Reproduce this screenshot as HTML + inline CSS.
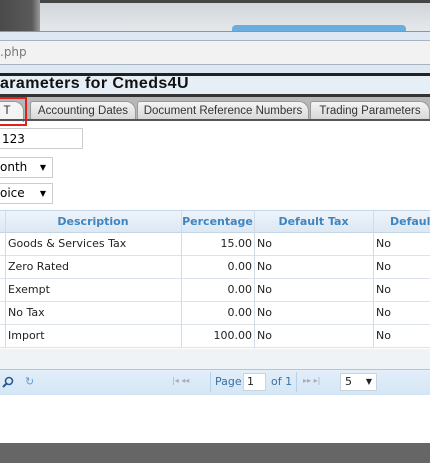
<!DOCTYPE html><html><head><style>
body{margin:0;width:430px;height:463px;overflow:hidden;position:relative;font-family:"DejaVu Sans","Liberation Sans",sans-serif;background:#fff}
.a{position:absolute}
.tab{position:absolute;top:101px;height:18px;background:linear-gradient(#f4f4f4,#d6d6d6);border:1px solid #999;border-bottom:none;border-radius:3px 10px 0 0;font-family:"Liberation Sans",sans-serif;font-size:11.5px;color:#333;line-height:18px;text-align:center}
.row{position:absolute;left:0;width:430px;height:22px;border-bottom:1px solid #dde3ea;font-size:11px;color:#222;line-height:22px}
.row span{position:absolute}
.vl{position:absolute;top:210px;height:138px;width:1px;background:#d3dbe4}
</style></head><body>
<div class="a" style="left:0;top:0;width:430px;height:32px;background:linear-gradient(#cfd3d8,#e6e9ec)"></div>
<div class="a" style="left:0;top:0;width:430px;height:3px;background:#444"></div>
<div class="a" style="left:0;top:0;width:40px;height:32px;background:linear-gradient(90deg,#4a4a4a,#5a5a5a 80%,#9a9a9a)"></div>
<div class="a" style="left:232px;top:25px;width:174px;height:7px;background:#6aaee0;border-radius:4px 4px 0 0"></div>
<div class="a" style="left:0;top:31px;width:430px;height:1px;background:#8a96a0"></div>
<div class="a" style="left:0;top:32px;width:430px;height:41px;background:#dde8f2"></div>
<div class="a" style="left:0;top:40px;width:430px;height:23px;background:#f2f2f2;border-top:1px solid #a8b4c0;border-bottom:1px solid #a8b4c0"></div>
<div class="a" style="left:0;top:45px;font-size:12px;color:#777">.php</div>
<div class="a" style="left:0;top:73px;width:430px;height:3px;background:#222"></div>
<div class="a" style="left:0;top:76px;width:430px;height:18px;background:#e6eef6"></div>
<div class="a" style="left:0;top:75px;font-family:'Liberation Sans',sans-serif;font-size:16px;font-weight:bold;color:#111;letter-spacing:0.4px">arameters for Cmeds4U</div>
<div class="a" style="left:0;top:94px;width:430px;height:3px;background:#333"></div>
<div class="a" style="left:0;top:97px;width:430px;height:24px;background:#b8b8b8"></div>
<div class="tab" style="left:-10px;width:32px;background:#f4f4f4;height:20px">T</div>
<div class="tab" style="left:30px;width:104px">Accounting Dates</div>
<div class="tab" style="left:137px;width:170px">Document Reference Numbers</div>
<div class="tab" style="left:310px;width:118px">Trading Parameters</div>
<div class="a" style="left:0;top:119px;width:430px;height:2px;background:#555"></div>
<div class="a" style="left:-2px;top:97px;width:25px;height:25px;border:2px solid #d22"></div>
<div class="a" style="left:-1px;top:128px;width:84px;height:21px;border:1px solid #ccc;font-size:12px;line-height:20px;padding-left:2px;box-sizing:border-box">123</div>
<div class="a" style="left:-1px;top:157px;width:52px;height:19px;border:1px solid #ccc;font-size:12px;line-height:19px">onth<span style="position:absolute;right:6px;font-size:8px">▼</span></div>
<div class="a" style="left:-1px;top:183px;width:52px;height:19px;border:1px solid #ccc;font-size:12px;line-height:19px">oice<span style="position:absolute;right:6px;font-size:8px">▼</span></div>
<div class="a" style="left:0;top:210px;width:430px;height:23px;background:linear-gradient(#eef4fa,#dce8f4);border-top:1px solid #c5d5e5;border-bottom:1px solid #c5d5e5;box-sizing:border-box;font-size:11px;font-weight:bold;color:#3f85c0;line-height:21px">
<span class="a" style="left:5px;width:176px;text-align:center">Description</span>
<span class="a" style="left:181px;width:73px;text-align:center">Percentage</span>
<span class="a" style="left:254px;width:119px;text-align:center">Default Tax</span>
<span class="a" style="left:390px">Default</span></div>
<div class="row" style="top:233px"><span style="left:8px">Goods &amp; Services Tax</span><span style="right:178px">15.00</span><span style="left:257px">No</span><span style="left:376px">No</span></div>
<div class="row" style="top:256px"><span style="left:8px">Zero Rated</span><span style="right:178px">0.00</span><span style="left:257px">No</span><span style="left:376px">No</span></div>
<div class="row" style="top:279px"><span style="left:8px">Exempt</span><span style="right:178px">0.00</span><span style="left:257px">No</span><span style="left:376px">No</span></div>
<div class="row" style="top:302px"><span style="left:8px">No Tax</span><span style="right:178px">0.00</span><span style="left:257px">No</span><span style="left:376px">No</span></div>
<div class="row" style="top:325px"><span style="left:8px">Import</span><span style="right:178px">100.00</span><span style="left:257px">No</span><span style="left:376px">No</span></div>
<div class="vl" style="left:5px"></div><div class="vl" style="left:181px"></div><div class="vl" style="left:254px"></div><div class="vl" style="left:373px"></div>
<div class="a" style="left:0;top:349px;width:430px;height:21px;background:#f0f3f6"></div>
<div class="a" style="left:0;top:369px;width:430px;height:26px;background:linear-gradient(#e2eef9,#d4e6f5);border-top:1px solid #a8c8e6;box-sizing:border-box;font-size:11px;color:#3a6fa5">
<svg class="a" style="left:2px;top:6px" width="12" height="12"><circle cx="7" cy="5" r="3.5" fill="none" stroke="#2a5a90" stroke-width="1.6"/><line x1="4.5" y1="7.5" x2="1" y2="11" stroke="#2a5a90" stroke-width="2"/></svg>
<span class="a" style="left:25px;top:5px;color:#6a9ad0">↻</span>
<span class="a" style="left:172px;top:6px;color:#aab;font-size:8px">|◂ ◂◂</span>
<span class="a" style="left:210px;top:2px;width:1px;height:20px;background:#b8d0e8"></span>
<span class="a" style="left:215px;top:5px">Page</span>
<span class="a" style="left:243px;top:3px;width:23px;height:18px;background:#fff;border:1px solid #c8d4e0;box-sizing:border-box;color:#222;padding-left:3px;line-height:16px">1</span>
<span class="a" style="left:271px;top:5px">of 1</span>
<span class="a" style="left:296px;top:2px;width:1px;height:20px;background:#b8d0e8"></span>
<span class="a" style="left:303px;top:6px;color:#aab;font-size:8px">▸▸ ▸|</span>
<span class="a" style="left:340px;top:3px;width:37px;height:18px;background:#fff;border:1px solid #c8d4e0;box-sizing:border-box;color:#222;padding-left:4px;line-height:16px">5<span style="position:absolute;right:4px;font-size:8px">▼</span></span>
</div>
<div class="a" style="left:0;top:443px;width:430px;height:20px;background:#666"></div>
</body></html>
